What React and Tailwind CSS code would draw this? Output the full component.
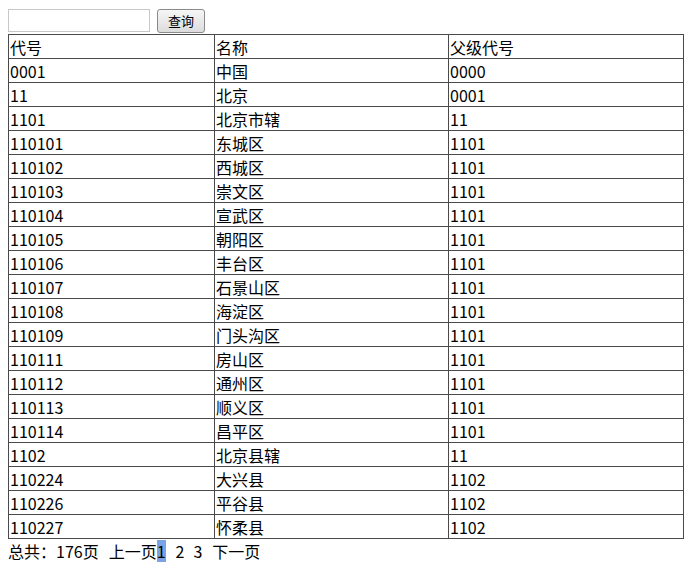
import React from "react";

const rows = [
  ["0001", "中国", "0000"],
  ["11", "北京", "0001"],
  ["1101", "北京市辖", "11"],
  ["110101", "东城区", "1101"],
  ["110102", "西城区", "1101"],
  ["110103", "崇文区", "1101"],
  ["110104", "宣武区", "1101"],
  ["110105", "朝阳区", "1101"],
  ["110106", "丰台区", "1101"],
  ["110107", "石景山区", "1101"],
  ["110108", "海淀区", "1101"],
  ["110109", "门头沟区", "1101"],
  ["110111", "房山区", "1101"],
  ["110112", "通州区", "1101"],
  ["110113", "顺义区", "1101"],
  ["110114", "昌平区", "1101"],
  ["1102", "北京县辖", "11"],
  ["110224", "大兴县", "1102"],
  ["110226", "平谷县", "1102"],
  ["110227", "怀柔县", "1102"],
];

const font = { fontFamily: '"Noto Sans CJK SC", "Liberation Sans", sans-serif' };

export default function App() {
  return (
    <div className="min-h-[575px] bg-white px-2 pt-2 text-[16px] text-black" style={font}>
      {/* search */}
      <div className="flex items-center gap-[7px] h-[25px]">
        <input className="w-[142px] h-[23px] border border-[#c8c8c8] outline-none" />
        <button className="w-[48px] h-[24px] rounded-[3px] border border-[#8a8a8a] bg-gradient-to-b from-[#f6f6f6] to-[#dcdcdc] text-[13px] leading-none">
          查询
        </button>
      </div>

      {/* table */}
      <table className="mt-[1px] w-[676px] border-collapse border border-[#4a4a4a] table-fixed">
        <colgroup>
          <col className="w-[206px]" />
          <col className="w-[234px]" />
          <col />
        </colgroup>
        <tbody>
          <tr className="h-[24px]">
            <td className="border border-[#4a4a4a] px-[1px] leading-[22px]">代号</td>
            <td className="border border-[#4a4a4a] px-[1px] leading-[22px]">名称</td>
            <td className="border border-[#4a4a4a] px-[1px] leading-[22px]">父级代号</td>
          </tr>
          {rows.map((r) => (
            <tr key={r[0]} className="h-[24px]">
              <td className="border border-[#4a4a4a] px-[1px] leading-[22px]">{r[0]}</td>
              <td className="border border-[#4a4a4a] px-[1px] leading-[22px]">{r[1]}</td>
              <td className="border border-[#4a4a4a] px-[1px] leading-[22px]">{r[2]}</td>
            </tr>
          ))}
        </tbody>
      </table>

      {/* pager */}
      <div className="flex items-center h-[24px] leading-[22px]">
        <span>总共：176页</span>
        <span className="ml-[10px]">上一页</span>
        <span className="bg-[#7aa3e5]">1</span>
        <span className="ml-[10px]">2</span>
        <span className="ml-[9px]">3</span>
        <span className="ml-[10px]">下一页</span>
      </div>
    </div>
  );
}
